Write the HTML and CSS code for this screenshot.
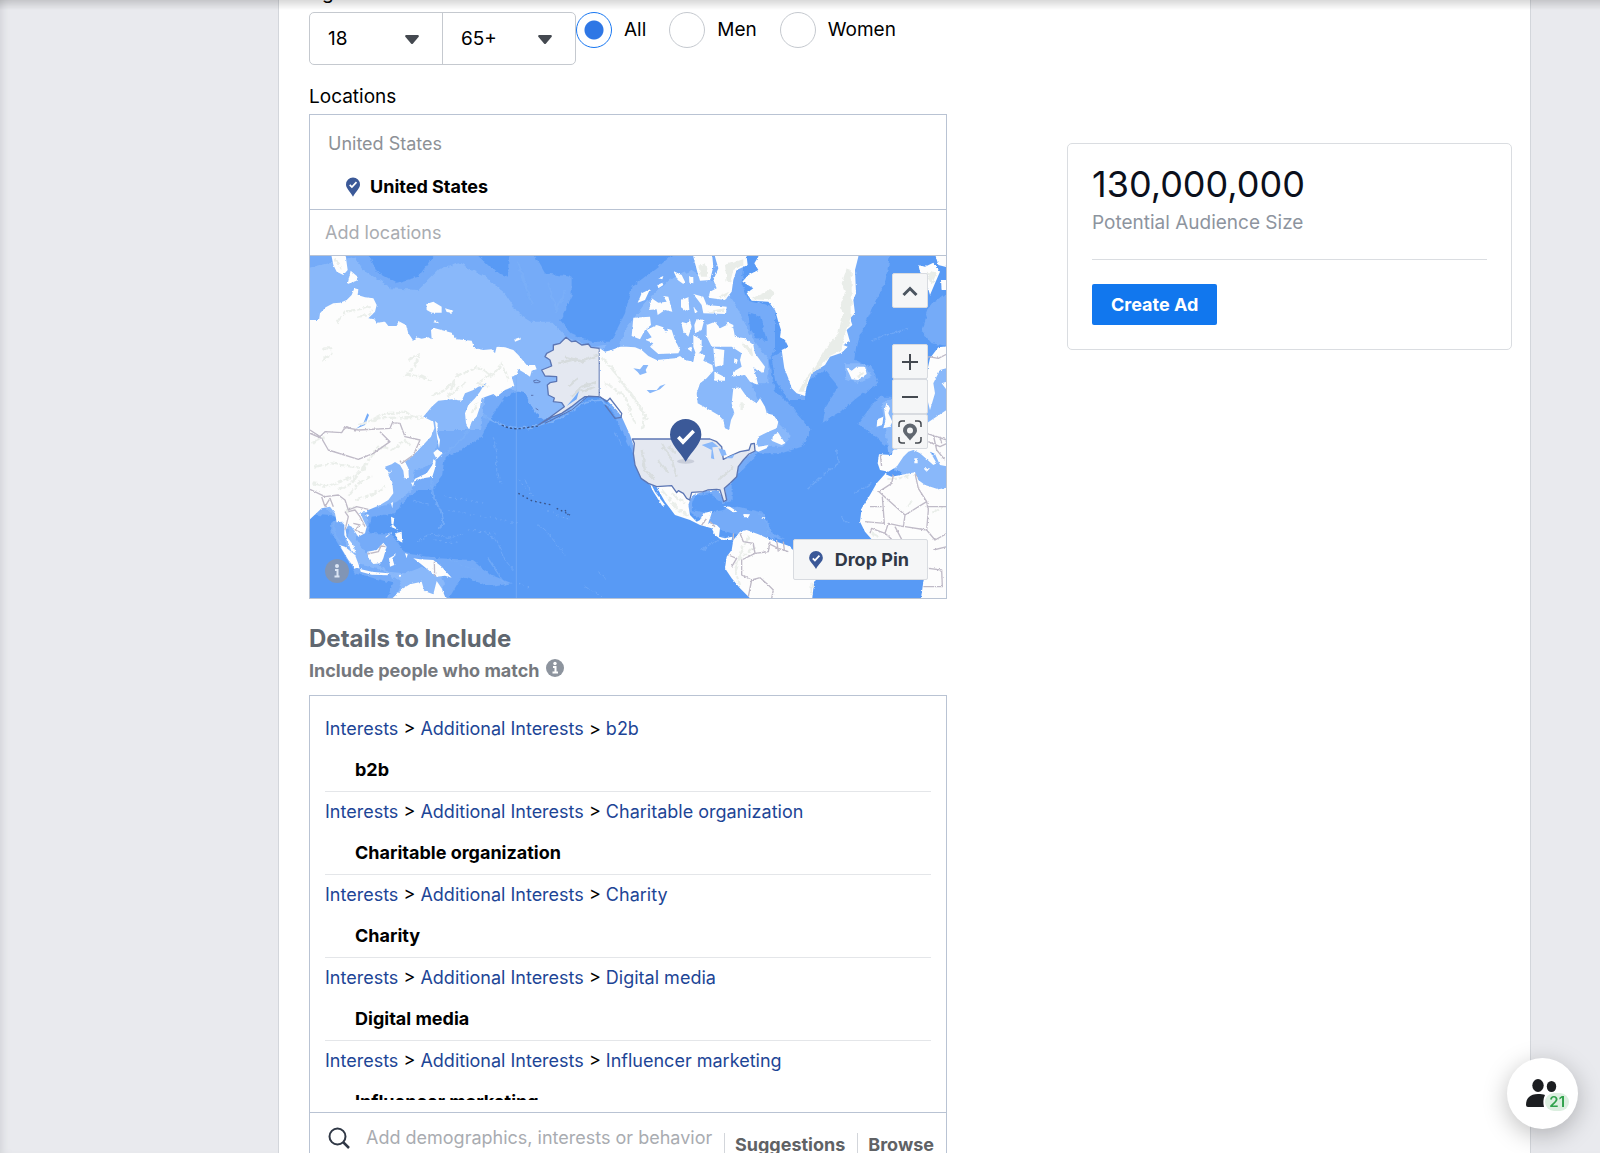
FILE: index.html
```html
<!DOCTYPE html>
<html lang="en">
<head>
    <meta charset="UTF-8">
    <meta name="viewport" content="width=device-width, initial-scale=1.0">
    <title>Audience</title>
    <link rel="stylesheet" href="styles.css">
</head>
<body>
    <main class="panel">
        <form class="targeting">
            <div class="demographics">
                <div class="age">
                    <label class="field-label" for="age-min">Age</label>
                    <div class="age-selects">
                        <div class="select">
                            <select id="age-min"><option>18</option></select>
                            <svg class="caret" width="14" height="9" viewBox="0 0 14 9"><path d="M1 0h12q1.500 .5 .5 2L8 8.500q-1 1-2 0L.5 2Q-.5.500 1 0z" fill="#444950"/></svg>
                        </div>
                        <div class="select">
                            <select aria-label="Maximum age"><option>65+</option></select>
                            <svg class="caret" width="14" height="9" viewBox="0 0 14 9"><path d="M1 0h12q1.500 .5 .5 2L8 8.500q-1 1-2 0L.5 2Q-.5.500 1 0z" fill="#444950"/></svg>
                        </div>
                    </div>
                </div>
                <div class="gender">
                    <span class="field-label">Gender</span>
                    <div class="radios">
                        <label class="radio"><input type="radio" name="gender" checked>All</label>
                        <label class="radio"><input type="radio" name="gender">Men</label>
                        <label class="radio"><input type="radio" name="gender">Women</label>
                    </div>
                </div>
            </div>

            <label class="field-label locations-label" for="locations">Locations</label>
            <div class="box locations">
                <div class="location-group">
                    <div class="location-country">United States</div>
                    <div class="location-item">
                        <svg width="14" height="20" viewBox="0 0 32 44"><path d="M16 0a16 16 0 0 1 16 16c0 9-9 15-16 28C9 31 0 25 0 16A16 16 0 0 1 16 0z" fill="#3b5998"/><path d="M8.500 17l5 5L24 11" fill="none" stroke="#fff" stroke-width="4"/></svg>
                        United States
                    </div>
                </div>
                <input class="location-input" id="locations" type="text" placeholder="Add locations">
                <div class="map">
                    <svg class="map-art" viewBox="0 0 1908 1026" preserveAspectRatio="xMidYMid slice">
                        <defs>
                            <filter id="rough-water" x="-5%" y="-5%" width="110%" height="110%">
                                <feTurbulence type="fractalNoise" baseFrequency=".06" numOctaves="3" seed="4"/>
                                <feDisplacementMap in="SourceGraphic" scale="14" xChannelSelector="R" yChannelSelector="G"/>
                            </filter>
                            <filter id="rough-land" x="-5%" y="-5%" width="110%" height="110%">
                                <feTurbulence type="fractalNoise" baseFrequency=".15" numOctaves="2" seed="7"/>
                                <feDisplacementMap in="SourceGraphic" scale="7" xChannelSelector="R" yChannelSelector="G"/>
                            </filter>
                        </defs>
                        <rect width="1908" height="1026" fill="#589af5"/>

                        <!-- shallow water, Asia and the Pacific -->
                        <g transform="translate(-15 -18)" filter="url(#rough-water)">
                            <path fill="#74abf8" d="M-15 -10H180L215 65 275 98 340 80 385 18V-10H520V18L570 65 610 80V-10H690V18L720 70 800 80 800 140 765 210 800 250 860 275 920 275 975 245V340H860L600 440 560 500 530 560 470 600 420 620 410 680 380 720 340 720 290 760 270 790 200 800 190 850 260 850 300 910 400 925 500 930 560 975 620 1000 560 1010 470 980 420 1065H240L265 1000 150 970 110 900 80 850 78 820 100 800 -15 790z"/>
                            <path fill="#89b8fa" d="M-15 60L150 20 175 60 260 115 340 120 400 60 460 40 540 80 600 130 640 190 680 215 740 215 780 260 860 290 975 275V320L800 480 720 512 690 490 660 430 600 415 540 440 525 540H400L390 640 330 660 320 720 270 760 180 780 190 830 150 860 190 920 250 965 300 970 350 950 400 960 420 1000 380 1065H262L290 1000 230 960 150 940 120 880 130 840 110 820 -15 700z"/>
                            <g fill="none" stroke="#7db1f8" stroke-linecap="round">
                                <path stroke-width="5" d="M535 495Q600 545 690 530L760 508 840 455 890 450 945 500"/>
                                <path stroke-width="6" opacity=".7" d="M490 540Q460 590 410 615M378 690L385 740 410 790 415 820 400 835M90 810Q75 850 110 880"/>
                                <path stroke-width="3" opacity=".6" stroke-dasharray="12 7" d="M565 560L575 610 575 660 588 705M660 690L680 730M700 825L740 860 780 915M540 850L575 870 600 930 625 960M340 875L380 850 430 865 470 855M430 925L480 950 520 960M840 1010L890 1040M880 965L900 985M325 750L370 765M930 550L950 590"/>
                                <path stroke-width="3" opacity=".7" stroke-dasharray="3 13" d="M420 740L540 760M430 780L640 820M490 840L570 850M390 870L460 880M640 690L720 780 790 810M640 1000L680 1020"/>
                                <path stroke-width="6" opacity=".6" d="M650 80L680 160M730 100L755 180 780 120M640 40L665 110M550 925L600 1000"/>
                            </g>
                        </g>
                        <path stroke="#7fb1f6" stroke-width="2" d="M619 282V1026"/>

                        <!-- shallow water, Atlantic side -->
                        <g transform="translate(945 -18)" filter="url(#rough-water)">
                            <path fill="#74abf8" d="M-40 270L0 190 20 110 100 50 170 -10H360L350 100 370 150 450 170 450 300 430 330 450 420 500 470 560 540 530 590 470 610 400 610 350 660 320 690 320 750 290 760 250 730 210 740 200 780 250 790 340 770 420 790 440 850 480 870 400 860 320 850 260 830 200 790 120 720 60 680 10 580 -60 440 -120 350z"/>
                            <path fill="#89b8fa" d="M-20 300L0 240 60 160 130 90 200 60 300 120 340 180 380 260 430 330 430 400 380 400 400 450 460 520 500 560 470 590 380 590 400 540 200 560 200 400 30 330z"/>
                            <path fill="#589af5" d="M370 190L405 200 425 270 395 265 375 235z"/>
                            <path fill="#74abf8" d="M690 -10H800L780 100 740 180 700 270 690 330 740 350 760 400 700 440 640 490 590 520 600 470 640 410 600 360 540 400 540 450 490 450 450 390 440 320 480 300 650 290 680 150zM980 120L910 170 885 240 920 280 980 290zM700 520L760 440 800 440 805 600 760 570 725 540z"/>
                            <path fill="#89b8fa" d="M660 340L720 340 740 380 700 400 660 385zM770 460L850 420 980 290V600L790 610 785 570zM830 600L980 620V720H890L800 650z"/>
                            <path fill="#589af5" d="M780 100L870 90 905 200 880 275 780 260 720 240 740 180z"/>
                            <g fill="none" stroke="#7db1f8" stroke-linecap="round" stroke-width="4" opacity=".6">
                                <path stroke-dasharray="14 7" d="M635 600L640 640 600 670 545 720M730 540L790 520M650 800L670 820M740 270L850 235M230 900L290 860 330 870M400 790Q440 820 425 850M690 730L740 700M520 1010L570 1000"/>
                            </g>
                        </g>

                        <!-- land, left half -->
                        <g transform="translate(-15 -18)">
                            <g fill="#fdfdfd" filter="url(#rough-land)">
                                <path d="M-15 210H42L45 190 62 172 85 160 105 158 125 150 140 135 148 115 160 118 158 135 180 142 205 145 215 165 210 185 190 205 208 208 215 218 240 215 250 228 275 228 280 213 303 225 310 250 325 272 335 262 350 266 370 262 380 268 378 240 390 235 440 248 455 268 500 272 508 295 535 300 560 298 570 310 575 290 600 292 625 300 640 315 665 345 690 345 695 358 680 362 675 380 660 370 640 358 635 375 620 380 628 408 600 420 575 440 565 432 530 445 525 470 515 500 500 515 492 537 483 520 480 490 490 465 510 445 525 425 535 408 520 410 505 420 480 430 470 452 440 448 400 452 380 470 355 500 385 515 388 535 378 560 340 600 320 620 300 635 310 655 312 683 298 685 295 662 285 645 270 636 260 643 240 650 252 668 262 658 250 675 262 700 265 730 250 750 225 765 190 780 185 787 165 787 175 810 185 830 180 850 160 860 150 845 140 830 130 825 122 840 125 860 145 885 152 910 140 905 130 880 118 855 118 825 110 815 95 817 90 790 75 770 50 775 15 808 -15 820z"/>
                                <path d="M75 -5H122V18L128 60 115 75 95 65 85 45zM137 62L158 80 155 92 128 102zM364 162L385 155 410 170 410 188 380 188 365 180zM420 175L445 182 440 188 425 186zM385 217L392 211 403 220zM628 268L645 262 648 268 630 275zM390 513L398 520 397 550 405 570 402 595 396 560z"/>
                                <path d="M385 608L397 598 413 610 395 628zM385 628L392 632 390 655 382 680 355 685 325 695 330 686 365 670 382 645zM318 698L328 696 324 710zM484 525H496L492 537zM258 760L264 756 262 775zM184 793L193 795 186 802zM258 800L268 805 265 825 280 840 260 832zM270 850L290 845 292 878 278 870zM240 862L262 845 245 862zM103 885L120 890 150 915 165 955 150 955 130 930zM165 957L200 965 250 970 248 976 200 974 167 965zM187 905L215 900 235 878 245 890 235 925 228 940 205 942 190 925zM252 925L275 912 262 925 268 945 255 950zM278 975L292 974 285 982zM300 910L308 912 305 925zM325 925L345 928 385 930 410 950 440 983 420 977 395 980 370 960 345 940zM262 1060V1045L295 1015 315 1003 350 995 358 1023 385 1033 395 993 410 1015 422 1045V1060z"/>
                            </g>
                            <path fill="#74abf8" d="M152 537L175 520 187 490 192 495 180 525zM545 398L535 412 530 408z"/>
                            <g fill="none" stroke="#ebefeb" stroke-width="7" stroke-dasharray="26 5 12 4" filter="url(#rough-water)">
                                <path d="M95 218L120 185 150 180 200 170M160 200L190 195 203 180M55 295L75 295 80 310 50 338M310 330L340 315 330 350 305 375 350 380 380 395M380 440L420 420 450 390 430 440 480 400M450 380L520 350 560 380 590 340 610 390M560 370L520 400 550 410M200 510L240 490 300 485 340 510M160 525L220 505 350 500M500 490L515 460M90 25L110 60"/>
                                <path d="M30 650L80 640 140 650 180 655M25 700L70 710 120 690 160 670M100 720L140 700 170 660 220 590 250 595M130 740L160 700 200 680M150 750L210 730 240 710M260 600L300 570 320 590M20 580L60 560M120 785L150 770"/>
                            </g>
                            <g fill="none" stroke="#bfbac7" stroke-width="4" stroke-linejoin="round" filter="url(#rough-land)">
                                <path d="M15 540L45 560 60 545 110 548 120 532 160 540 255 535 262 518 285 520 300 560 345 570 325 615 290 640 285 632M50 565L70 600 160 628 205 610 255 575 225 545M15 550L50 565M115 540L125 530 150 540M15 718L60 740 100 735 120 750 130 780 155 770 190 778M50 740L60 770 75 745 85 770M120 785L130 800 120 840M130 785L150 780 165 800 180 830M145 820L165 825 150 840 175 850M187 912L220 905 228 888 243 890M388 935L389 980"/>
                            </g>

                            <!-- Alaska -->
                            <path fill="#e4e8f1" stroke="#5c76b4" stroke-width="4" stroke-linejoin="round" d="M783 262L800 275 812 273 830 285 850 282 858 292 883 295V440L840 440 825 450 800 470 770 490 740 502 700 525 735 502 778 470 770 458 745 455 748 444 730 435 727 405 735 398 755 394 755 380 720 378 710 360 740 348 735 330 720 320 725 310 745 300 745 285 765 280z"/>
                            <path fill="none" stroke="#d6dbdd" stroke-width="7" filter="url(#rough-water)" d="M780 320L830 335 880 315M760 340L800 330M800 440L830 410 875 395M825 425L870 410M790 410L820 385"/>
                            <path fill="#74abf8" d="M805 445L822 423 815 448 785 468z"/>
                            <path fill="none" stroke="#5c76b4" stroke-width="3" d="M883 440L850 438 800 480 720 520M686 392L695 390 706 395 700 398 688 398zM678 436H685M692 475L700 480"/>
                            <path fill="none" stroke="#3a5488" stroke-width="4" stroke-dasharray="7 6" d="M590 525Q620 540 650 535L700 528"/>
                            <path fill="none" stroke="#3a5488" stroke-width="4" stroke-dasharray="5 9" d="M640 730L680 752 740 765M755 775L795 795M780 780L790 795"/>
                        </g>

                        <!-- land, right half -->
                        <g transform="translate(945 -18)">
                            <g fill="#fdfdfd" filter="url(#rough-land)">
                                <path d="M-76 295L-60 305 -40 300 -15 290 5 290 30 292 50 300 70 318 95 330 150 325 165 318 180 330 205 335 210 310 230 310 240 318 235 332 262 345 265 362 245 385 225 400 215 430 218 460 245 475 280 495 295 510 300 535 312 540 318 510 328 490 320 460 325 415 345 412 365 440 395 460 405 445 420 470 425 490 445 495 460 515 455 535 430 545 400 560 395 580 400 590 430 585 425 595 400 605 390 600 355 630 340 650 335 680 315 700 300 715 303 745 297 752 285 730 275 720 235 725 205 735 195 750 190 765 195 795 215 815 225 810 235 790 262 783 255 805 250 818 275 825 285 835 282 860 300 865 322 860 320 870 290 870 270 855 260 835 225 825 195 810 150 795 120 755 95 712 80 705 90 725 120 765 112 768 85 725 72 700 50 685 30 645 25 585 15 555 -10 500 -25 480 -55 450 -76 440z"/>
                                <path d="M445 555L460 548 480 580 470 585 440 572z"/>
                                <path d="M205 -5H262V20L265 50 255 90 225 92 218 70 205 20zM270 -5H365V20L368 45 335 60 325 90 320 125 300 150 250 143 255 125 275 115 265 90 280 55 270 20zM145 63L170 75 180 95 175 102 158 90zM192 78L205 85 205 100 193 98zM100 85L115 78 112 88zM97 105L112 98 115 105 100 115zM75 118L60 150 38 158 50 130zM80 145L100 158 125 155 115 138 130 140 142 185 120 180 98 195 95 178 72 180zM168 150L190 142 193 180 182 182 168 172zM205 132L235 140 245 165 305 170 303 192 235 190 230 165zM205 170L218 185 210 190zM25 203L75 200 78 225 60 240 45 268 20 258zM65 240L95 225 115 232 122 248 128 236 140 240 150 270 165 300 160 310 100 312 75 290 85 280 62 270 80 262zM168 215L185 220 195 210 200 230 190 260 175 245zM215 207L238 210 230 240 210 250 208 225zM205 255L230 270 230 300 215 318 205 290zM185 295L200 290 200 305zM245 225L270 215 285 235 305 225 325 235 330 260 360 265 385 285 390 310 420 350 415 368 395 360 385 350 400 405 375 395 360 375 320 380 325 365 350 350 345 330 350 310 320 290 260 290 245 260zM265 295L298 300 295 345 270 350zM268 365L300 382 300 392 268 392zM305 215L325 225 325 232 308 230zM328 325L338 330 335 342 327 338z"/>
                                <path d="M400 -5V20L388 40 400 60 370 75 352 95 385 115 365 130 380 152 430 155 450 180 460 215 468 240 465 262 480 270 490 290 470 300 478 355 490 385 500 415 515 430 540 438 545 410 560 370 600 345 615 320 650 308 668 290 655 285 675 275 665 240 682 225 675 205 690 190 685 150 693 130 690 60 700 20V-5z"/>
                                <path d="M663 352L680 362 695 350 720 350 725 372 700 390 680 388 672 370zM880 45L900 50 925 38 945 65 930 100 915 135 905 100 885 65zM925 -5H980V55L940 45zM948 90H980V120H950zM980 288L940 292 915 325 905 370V440L915 480 930 430 925 400 945 360 980 350zM785 458L795 475 790 490 802 515 795 530 775 535 782 510 778 480zM757 508L775 500 772 525 755 530zM950 400L980 390V440z"/>
                                <path d="M905 520L980 470V652L945 645 930 612 915 605 935 640 925 645 885 610 865 600 850 605 835 620 815 650 790 665 765 660 758 640 762 613 800 615 805 600 830 595 830 560zM868 625H878V640H868zM895 655L915 655 905 665zM780 672L800 680 870 667 880 690 900 705 940 718 980 710V1060H888V1045L895 995 905 955 890 910 870 885 800 870 740 868 720 845 705 815 710 775 735 735 755 700z"/>
                                <path d="M375 1060V1045L345 1015 320 985 300 955 305 920 320 900 325 870 345 845 365 840 400 853 440 870 490 887 510 905 560 935 580 975 567 1000 560 1060zM295 768L315 770 337 785 325 787zM355 792L375 793 370 802 356 802zM410 802H420V806H410z"/>
                            </g>
                            <path fill="#89b8fa" d="M25 355L45 358 55 345 70 345 62 360 65 368 45 375 38 366zM65 420L95 420 105 408 122 402 105 418 75 430z"/>
                            <g fill="#e9ede9" filter="url(#rough-water)">
                                <path d="M680 60L665 55 650 100 660 130 645 170 655 190 640 250 605 290 570 350 545 380 520 425H536L555 375 595 340 610 320 650 300 660 240 675 225 680 190z"/>
                                <path d="M380 148L390 140 435 120 450 130 430 150zM220 50L240 40 250 80H228zM300 45L355 28 355 45 325 60 315 100 305 95zM280 140L312 125 300 145zM245 185L295 175 298 187zM350 280L380 295 385 320 375 310zM695 375L718 365 700 385zM905 65L935 70 920 105z"/>
                            </g>
                            <path fill="none" stroke="#ebefeb" stroke-width="7" stroke-dasharray="26 5 12 4" filter="url(#rough-water)" d="M-70 320L-20 380 30 450 60 500 50 540M-60 400L0 440 30 520M-40 350L-10 400 20 430 70 510M110 720L160 780 190 795M140 730L180 760M370 860L350 900 330 960 345 1005M390 890L340 930M790 690L850 680M740 850L760 860M850 770L860 755M920 790L950 770M350 460L350 480M560 1000V1035"/>

                            <!-- contiguous states -->
                            <path fill="#e4e8f1" stroke="#5c76b4" stroke-width="4" stroke-linejoin="round" d="M22 567H255L275 575 290 590 295 628 315 618 345 605 372 600 378 582 388 580 390 603 372 612 355 630 340 650 335 680 315 700 298 715 305 750 296 755 285 720 275 718 248 720 235 725 200 727 194 750 185 745 175 730 160 722 155 728 140 707 95 710 70 700 48 685 30 645 25 610 28 580z"/>
                            <path fill="none" stroke="#d8dddf" stroke-width="7" filter="url(#rough-water)" d="M110 580L140 630 155 680M130 590L150 610M50 600L60 660 90 690M100 630L130 670M280 690L325 650"/>
                            <path fill="#89b8fa" d="M230 585L262 575 280 590 262 592 268 628 258 625 260 600zM280 595L300 600 305 615 290 618zM300 625L330 612 322 625z"/>
                            <path fill="none" stroke="#5c76b4" stroke-width="4" d="M-76 440L-55 455 -45 445 -10 490 -12 502 -30 505 -60 465"/>
                            <g fill="none" stroke="#bfbac7" stroke-width="4" stroke-linejoin="round" filter="url(#rough-land)">
                                <path d="M345 850L355 875 385 880 390 910 430 905 435 875M430 880L460 895 490 905M455 870L460 905M475 875L478 900M310 915L335 925 320 950M385 885L390 910 350 930 350 975 380 990 370 1040M380 990L405 983 430 1005 445 1020 440 1045M230 825L245 805M255 815L270 830M325 870V850"/>
                                <path d="M766 615L770 650M805 675L800 700 762 725 840 795 905 755 880 715 870 670M772 740L778 820 720 815M735 770H770M840 795L835 830 790 820 780 850M840 830L905 840 910 780 905 755M905 770L966 770M735 850L740 835 780 850 800 868M810 830L830 868M905 840L930 870 966 850M910 955L950 960 952 1010 895 1010M925 900L966 890M910 320L940 325 966 312M905 550L966 570M910 575L945 590 966 580M925 555L935 600 960 630M945 560L950 580"/>
                            </g>

                            <!-- selected location -->
                            <ellipse cx="182" cy="634" rx="26" ry="7" fill="#8a91a5" opacity=".3"/>
                            <path fill="#3b5998" d="M182 507A47 47 0 0 1 229 554C229 580 202 602 182 635 162 602 135 580 135 554A47 47 0 0 1 182 507z"/>
                            <path fill="none" stroke="#fff" stroke-width="11" d="M160 561L174 576 206 543"/>
                        </g>
                    </svg>
                    <div class="map-controls">
                        <button class="map-btn collapse" type="button" aria-label="Collapse map"><svg width="18" height="12" viewBox="0 0 18 12"><path d="M2.500 10L9 3.500 15.500 10" fill="none" stroke="#4b5560" stroke-width="3"/></svg></button>
                        <button class="map-btn" type="button" aria-label="Zoom in"><svg width="18" height="18" viewBox="0 0 18 18"><path d="M9 1v16M1 9h16" stroke="#444950" stroke-width="2"/></svg></button>
                        <button class="map-btn" type="button" aria-label="Zoom out"><svg width="18" height="18" viewBox="0 0 18 18"><path d="M1 9h16" stroke="#444950" stroke-width="2"/></svg></button>
                        <button class="map-btn" type="button" aria-label="Locate"><svg width="24" height="24" viewBox="0 0 24 24"><path d="M1 7V4q0-3 3-3h3M17 1h3q3 0 3 3v3M23 17v3q0 3-3 3h-3M7 23H4q-3 0-3-3v-3" fill="none" stroke="#444950" stroke-width="1.500"/><path fill="#606770" fill-rule="evenodd" d="M12 3.500a7 7 0 0 1 7 7c0 3-4 6-7 10-3-4-7-7-7-10a7 7 0 0 1 7-7zm0 4a3 3 0 1 0 0 6 3 3 0 0 0 0-6z"/></svg></button>
                    </div>
                    <button class="map-info" type="button" aria-label="Map information"><svg width="24" height="24" viewBox="0 0 24 24"><circle cx="12" cy="12" r="12" fill="#8195b5"/><circle cx="12" cy="7" r="2" fill="#dbe5f4"/><path d="M10 11h2.500v6M9.500 17.500h5" fill="none" stroke="#dbe5f4" stroke-width="2"/></svg></button>
                    <button class="drop-pin" type="button">
                        <svg width="14" height="18" viewBox="0 0 32 42"><path d="M16 0a16 16 0 0 1 16 16c0 9-9 14-16 26C9 30 0 25 0 16A16 16 0 0 1 16 0z" fill="#3b5998"/><path d="M8.500 17l5 5L24 11" fill="none" stroke="#fff" stroke-width="4"/></svg>
                        Drop Pin
                    </button>
                </div>
            </div>

            <h2>Details to Include</h2>
            <div class="match-label">
                <label for="interests">Include people who match</label>
                <svg width="18" height="18" viewBox="0 0 18 18"><circle cx="9" cy="9" r="9" fill="#8d949e"/><circle cx="9" cy="4.500" r="1.700" fill="#fff"/><path d="M7 8h2.500v5.500M6.500 13.500h5.500" fill="none" stroke="#fff" stroke-width="2"/></svg>
            </div>
            <div class="box details">
                <ul class="interests">
                    <li>
                        <div class="crumbs"><a href="#">Interests</a> &gt; <a href="#">Additional Interests</a> &gt; <a href="#">b2b</a></div>
                        <div class="interest">b2b</div>
                    </li>
                    <li>
                        <div class="crumbs"><a href="#">Interests</a> &gt; <a href="#">Additional Interests</a> &gt; <a href="#">Charitable organization</a></div>
                        <div class="interest">Charitable organization</div>
                    </li>
                    <li>
                        <div class="crumbs"><a href="#">Interests</a> &gt; <a href="#">Additional Interests</a> &gt; <a href="#">Charity</a></div>
                        <div class="interest">Charity</div>
                    </li>
                    <li>
                        <div class="crumbs"><a href="#">Interests</a> &gt; <a href="#">Additional Interests</a> &gt; <a href="#">Digital media</a></div>
                        <div class="interest">Digital media</div>
                    </li>
                    <li>
                        <div class="crumbs"><a href="#">Interests</a> &gt; <a href="#">Additional Interests</a> &gt; <a href="#">Influencer marketing</a></div>
                        <div class="interest">Influencer marketing</div>
                    </li>
                </ul>
                <div class="search">
                    <svg width="22" height="22" viewBox="0 0 22 22"><circle cx="9.500" cy="9.500" r="8" fill="none" stroke="#303846" stroke-width="2"/><path d="M15 15l6 6" stroke="#303846" stroke-width="2.500"/></svg>
                    <input id="interests" type="text" placeholder="Add demographics, interests or behavior">
                    <div class="search-actions">
                        <button type="button">Suggestions</button>
                        <button type="button">Browse</button>
                    </div>
                </div>
            </div>
        </form>

        <aside class="card">
            <div class="audience-size">130,000,000</div>
            <div class="audience-label">Potential Audience Size</div>
            <button class="create" type="button">Create Ad</button>
        </aside>
    </main>

    <div class="top-shadow"></div>

    <button class="people" type="button" aria-label="People online">
        <svg width="34" height="30" viewBox="0 0 34 30"><ellipse cx="13" cy="6.500" rx="5.700" ry="6.500" fill="#1c1e21"/><ellipse cx="26.500" cy="7.500" rx="4.700" ry="5.500" fill="#1c1e21"/><path d="M1 26c0-7 4-11 12-11 3 0 5 0 7 1-2 4-2 8-1 12H3q-2 0-2-2z" fill="#1c1e21"/></svg>
        <span class="count">21</span>
    </button>
</body>
</html>
```
FILE: styles.css
```css
* {
    box-sizing: border-box;
}
body {
    margin: 0;
    height: 100vh;
    overflow: hidden;
    background: #e9eaee;
    box-shadow: inset 8px 0 8px -6px #d0d2d6;
    font-family: Inter, "Liberation Sans", sans-serif;
    font-size: 18px;
    line-height: 24px;
    color: #000;
}
button, input, select {
    font: inherit;
}
button {
    cursor: pointer;
}
svg {
    display: block;
    flex: none;
}
.panel {
    display: flex;
    justify-content: space-between;
    align-items: flex-start;
    margin: -20px 69px 0 278px;
    padding: 0 18px 0 30px;
    min-height: calc(100vh + 20px);
    background: #fff;
    border: 1px solid #d3d6db;
    border-width: 0 1px;
}
.targeting {
    width: 638px;
}

.demographics {
    display: flex;
}
.field-label {
    display: block;
    height: 32px;
    font-size: 19px;
    line-height: 26px;
}
.age-selects {
    display: flex;
    width: 267px;
    height: 53px;
    border: 1px solid #c5c9cf;
    border-radius: 5px;
}
.select {
    position: relative;
    flex: 1;
}
.select + .select {
    border-left: 1px solid #c5c9cf;
}
.select select {
    appearance: none;
    width: 100%;
    height: 100%;
    padding: 0 18px;
    border: 0;
    background: none;
    font-size: 19px;
    color: #000;
}
.caret {
    position: absolute;
    right: 23px;
    top: 22px;
    pointer-events: none;
}
.radios {
    display: flex;
    gap: 23px;
}
.radio {
    display: flex;
    align-items: center;
    gap: 12px;
    font-size: 19px;
    line-height: 36px;
}
.radio input {
    appearance: none;
    width: 36px;
    height: 36px;
    margin: 0;
    border: 1px solid #c5c9cf;
    border-radius: 50%;
}
.radio input:checked {
    border-color: #1877f2;
    background: radial-gradient(circle, #2f77e5 9px, #fff 10px);
}
.locations-label {
    height: 30px;
    margin-top: 19px;
}

.box {
    border: 1px solid #b9c3d3;
}
.location-group {
    height: 95px;
    padding: 17px 18px 0;
    border-bottom: 1px solid #b9c3d3;
}
.location-country {
    color: #8d9196;
}
.location-item {
    display: flex;
    align-items: center;
    gap: 10px;
    margin-top: 19px;
    padding-left: 18px;
    font-weight: 700;
}
.location-input {
    display: block;
    width: 100%;
    height: 46px;
    padding: 0 15px;
    border: 0;
    border-bottom: 1px solid #b9c3d3;
}
input::placeholder {
    color: #a9acb1;
    opacity: 1;
}
.map {
    position: relative;
}
.map-art {
    width: 100%;
    height: 342px;
}
.map-controls {
    position: absolute;
    top: 17px;
    right: 18px;
}
.map-btn {
    display: flex;
    align-items: center;
    justify-content: center;
    width: 36px;
    height: 35px;
    padding: 0;
    border: 1px solid #d8dbe0;
    border-radius: 2px;
    background: #f5f6f7;
}
.collapse {
    margin-bottom: 36px;
}
.map-info {
    position: absolute;
    left: 15px;
    bottom: 15px;
    padding: 0;
    border: 0;
    background: none;
}
.drop-pin {
    position: absolute;
    right: 18px;
    bottom: 18px;
    display: flex;
    align-items: center;
    gap: 12px;
    height: 41px;
    padding: 0 18px 0 15px;
    border: 1px solid #d8dbe0;
    border-radius: 2px;
    background: #f5f6f7;
    font-weight: 700;
    color: #303846;
}

h2 {
    margin: 25px 0 0;
    font-size: 24px;
    line-height: 30px;
    font-weight: 700;
    color: #606770;
}
.match-label {
    display: flex;
    gap: 7px;
    margin-top: 5px;
    margin-bottom: 12px;
    font-weight: 700;
    color: #75787d;
}
.interests {
    list-style: none;
    height: 404px;
    margin: 0 15px 12px;
    padding: 13px 0 0;
    overflow: hidden;
}
.interests li {
    padding: 8px 0 9px;
    border-bottom: 1px solid #e4e6e9;
}
.crumbs a {
    color: #1d4596;
    text-decoration: none;
}
.interest {
    margin-top: 17px;
    padding-left: 30px;
    font-weight: 700;
}
.search {
    display: flex;
    align-items: center;
    height: 50px;
    padding: 0 0 0 18px;
    border-top: 1px solid #b9c3d3;
}
.search input {
    flex: 1;
    min-width: 0;
    padding: 0;
    margin-left: 16px;
    border: 0;
}
.search-actions {
    display: flex;
    padding-top: 15px;
}
.search-actions button {
    padding: 0 12px 0 10px;
    border: 0;
    border-left: 1px solid #d3d6db;
    background: none;
    font-weight: 700;
    color: #606265;
}

.card {
    width: 445px;
    margin-top: 163px;
    padding: 24px;
    border: 1px solid #dadde1;
    border-radius: 5px;
}
.audience-size {
    font-size: 36px;
    line-height: 32px;
    color: #0b101c;
}
.audience-label {
    margin-top: 11px;
    padding-bottom: 24px;
    border-bottom: 1px solid #dadde1;
    font-size: 19px;
    color: #8d949e;
}
.create {
    height: 41px;
    margin-top: 24px;
    padding: 0 19px;
    border: 0;
    border-radius: 2px;
    background: #1177ee;
    color: #fff;
    font-weight: 700;
}

.top-shadow {
    position: fixed;
    top: 0;
    left: 0;
    right: 0;
    height: 10px;
    background: linear-gradient(rgba(0, 0, 0, .15), rgba(0, 0, 0, 0));
}
.people {
    position: fixed;
    right: 22px;
    bottom: 24px;
    display: grid;
    place-items: center;
    width: 71px;
    height: 71px;
    padding: 0 2px 0 0;
    border: 0;
    border-radius: 50%;
    background: #fff;
    box-shadow: 0 6px 24px rgba(0, 0, 0, .25);
}
.count {
    position: absolute;
    right: 9px;
    bottom: 18px;
    padding: 0 4px;
    border-radius: 9px;
    background: #dcefe0;
    font-size: 15px;
    line-height: 18px;
    font-weight: 600;
    color: #31a24c;
}
```
